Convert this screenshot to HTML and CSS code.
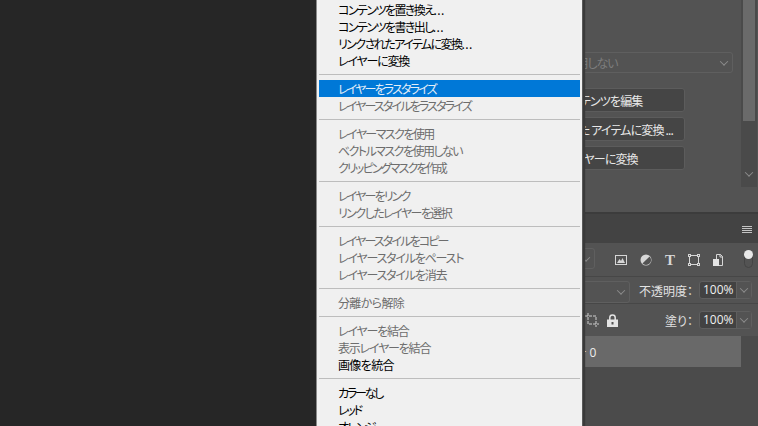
FILE: index.html
```html
<!DOCTYPE html>
<html lang="ja">
<head>
    <meta charset="UTF-8">
    <title>レイヤーメニュー</title>
    <link rel="stylesheet" href="styles.css">
</head>
<body>
    <div class="workspace"></div>

    <div class="panels">
        <div class="props">
            <div class="props-body">
                <div class="select select-disabled"><span>マスクを使用しない</span><i class="chev"></i></div>
                <button class="btn">コンテンツを編集</button>
                <button class="btn">リンクされた アイテムに変換 ...</button>
                <button class="btn">レイヤーに変換</button>
            </div>
            <div class="scrollbar">
                <div class="thumb"></div>
                <i class="chev"></i>
            </div>
        </div>

        <div class="tabs">
            <div class="hamburger"><i></i><i></i><i></i><i></i></div>
        </div>

        <div class="row row-filter">
            <div class="select filter-select"><i class="chev"></i></div>
            <div class="filter-icons">
                <svg width="12" height="12" viewBox="0 0 12 12"><rect x="0.5" y="1.5" width="11" height="9" fill="none" stroke="#d6d6d6"/><path d="M2 9l2.5-4 1.5 2 1.5-3 2.5 5z" fill="#d6d6d6"/></svg>
                <svg width="12" height="12" viewBox="0 0 12 12"><circle cx="6" cy="6" r="5.5" fill="#d6d6d6"/><path d="M9.6 2.4a5 5 0 0 1-7.2 7.2z" fill="#535353"/></svg>
                <span class="icon-t">T</span>
                <svg width="12" height="12" viewBox="0 0 12 12"><rect x="1.5" y="1.5" width="9" height="9" fill="none" stroke="#d6d6d6"/><g fill="#535353" stroke="#d6d6d6"><rect x="0.5" y="0.5" width="2" height="2"/><rect x="9.5" y="0.5" width="2" height="2"/><rect x="0.5" y="9.5" width="2" height="2"/><rect x="9.5" y="9.5" width="2" height="2"/></g></svg>
                <svg width="10" height="12" viewBox="0 0 10 12"><path d="M3.5 0.5h4l2 2v9h-6z" fill="none" stroke="#d6d6d6"/><path d="M7 0v3h3" fill="none" stroke="#d6d6d6"/><rect x="0" y="5" width="6" height="7" fill="#e4e4e4"/></svg>
            </div>
            <div class="toggle"><i></i></div>
        </div>

        <div class="row row-opacity">
            <div class="select blend-select"><i class="chev"></i></div>
            <span class="label">不透明度：</span>
            <div class="value"><span>100%</span><b><i class="chev"></i></b></div>
        </div>

        <div class="row row-fill">
            <svg class="icon-crop" width="14" height="14" viewBox="0 0 14 14"><path d="M3 0v11h11M0 3h11v11" fill="none" stroke="#cfcfcf" stroke-dasharray="3 1"/></svg>
            <svg class="icon-lock" width="11" height="13" viewBox="0 0 11 13"><path d="M2.8 6V3.6a2.7 2.7 0 0 1 5.4 0V6" fill="none" stroke="#e4e4e4" stroke-width="1.5"/><path d="M0 5.5h11V13H0z" fill="#e4e4e4"/><rect x="4.5" y="8" width="2" height="2.5" fill="#535353"/></svg>
            <span class="label">塗り：</span>
            <div class="value"><span>100%</span><b><i class="chev"></i></b></div>
        </div>

        <div class="layer-list">
            <div class="layer">レイヤー <span class="layer-num">0</span></div>
        </div>
    </div>

    <ul class="menu">
        <li class="t3">コンテンツを置き換え<span class="dots">...</span></li>
        <li class="t3">コンテンツを書き出し<span class="dots">...</span></li>
        <li class="t3">リンクされたアイテムに変換<span class="dots">...</span></li>
        <li class="t2">レイヤーに変換</li>
        <li class="sep"></li>
        <li class="active t4">レイヤーをラスタライズ</li>
        <li class="off t4">レイヤースタイルをラスタライズ</li>
        <li class="sep"></li>
        <li class="off t3">レイヤーマスクを使用</li>
        <li class="off t3">ベクトルマスクを使用しない</li>
        <li class="off t4">クリッピングマスクを作成</li>
        <li class="sep"></li>
        <li class="off t4">レイヤーをリンク</li>
        <li class="off t3">リンクしたレイヤーを選択</li>
        <li class="sep"></li>
        <li class="off t4">レイヤースタイルをコピー</li>
        <li class="off t2">レイヤースタイルをペースト</li>
        <li class="off t2">レイヤースタイルを消去</li>
        <li class="sep"></li>
        <li class="off t1">分離から解除</li>
        <li class="sep"></li>
        <li class="off t2">レイヤーを結合</li>
        <li class="off t2">表示レイヤーを結合</li>
        <li class="t1">画像を統合</li>
        <li class="sep"></li>
        <li class="t5">カラーなし</li>
        <li class="t5">レッド</li>
        <li class="t4">オレンジ</li>
    </ul>
</body>
</html>
```
FILE: styles.css
```css
body {
    margin: 0;
    width: 758px;
    height: 426px;
    overflow: hidden;
    display: flex;
    position: relative;
    background-color: #262626;
    font-family: "Noto Sans CJK JP", "Liberation Sans", sans-serif;
    font-size: 12px;
    font-feature-settings: "palt";
    color: #e6e6e6;
}
.workspace {
    flex: 0 0 458px;
}
.panels {
    flex: 0 0 300px;
    display: flex;
    flex-direction: column;
    background-color: #535353;
}

/* top panel */
.props {
    height: 212px;
    display: flex;
    border-bottom: 1px solid #3c3c3c;
}
.props-body {
    flex: 1;
    padding-top: 52px;
}
.select {
    box-sizing: border-box;
    border: 1px solid #5f5f5f;
    border-radius: 3px;
    display: flex;
    align-items: center;
    justify-content: space-between;
    padding: 0 5px 0 8px;
}
.select-disabled {
    height: 21px;
    margin: 0 8px 15px 20px;
    padding-left: 47px;
    color: #7d7d7d;
    letter-spacing: -1px;
}
.btn {
    display: block;
    box-sizing: border-box;
    width: 170px;
    height: 24px;
    margin: 0 0 5px 57px;
    padding: 0 0 0 2px;
    background-color: #454545;
    border: 1px solid #5c5c5c;
    border-radius: 3px;
    color: #e8e8e8;
    font: inherit;
    font-feature-settings: inherit;
    letter-spacing: -0.85px;
}
.scrollbar {
    flex: 0 0 16px;
    height: 187px;
    margin-right: 1px;
    background-color: #4a4a4a;
    display: flex;
    flex-direction: column;
    align-items: center;
}
.thumb {
    width: 12px;
    height: 121px;
    background-color: #6a6a6a;
}
.scrollbar .chev {
    margin-top: 50px;
}
.chev {
    display: block;
    flex: none;
    width: 5px;
    height: 5px;
    border-right: 1px solid #8c8c8c;
    border-bottom: 1px solid #8c8c8c;
    transform: rotate(45deg) translate(-1px, -1px);
}

/* tab band */
.tabs {
    height: 30px;
    background-color: #434343;
    border-top: 1px solid #3c3c3c;
    box-sizing: border-box;
    display: flex;
    align-items: center;
    justify-content: flex-end;
    padding-right: 6px;
}
.hamburger i {
    display: block;
    width: 10px;
    height: 1px;
    margin-top: 1px;
    background-color: #c4c4c4;
}

/* layer option rows */
.row {
    display: flex;
    align-items: center;
    border-bottom: 1px solid #474747;
    box-sizing: border-box;
    padding-left: 20px;
}
.row-filter {
    height: 34px;
}
.filter-select {
    width: 117px;
    height: 21px;
    justify-content: flex-end;
    margin-top: -2px;
}
.filter-icons {
    display: flex;
    align-items: center;
    gap: 13px;
    margin-left: 20px;
}
.icon-t {
    width: 10px;
    font-family: "Liberation Serif", serif;
    font-size: 15px;
    font-weight: bold;
    line-height: 12px;
    text-align: center;
    color: #d6d6d6;
}
.toggle {
    box-sizing: border-box;
    width: 9px;
    height: 18px;
    margin: -2px 5px 0 auto;
    border: 1px solid #444;
    border-radius: 5px;
    position: relative;
}
.toggle i {
    position: absolute;
    left: -1px;
    top: -1px;
    width: 9px;
    height: 9px;
    border-radius: 50%;
    background-color: #e8e8e8;
}
.row-opacity {
    height: 27px;
}
.blend-select {
    width: 152px;
    height: 22px;
    justify-content: flex-end;
    margin-top: 3px;
}
.label {
    margin-left: auto;
    margin-right: 6px;
    color: #e2e2e2;
    white-space: nowrap;
}
.value {
    box-sizing: border-box;
    width: 53px;
    height: 18px;
    margin-right: 6px;
    display: flex;
    border: 1px solid #5f5f5f;
    border-radius: 3px;
    background-color: #424242;
    font-family: "Open Sans", sans-serif;
    line-height: 16px;
    color: #f0f0f0;
}
.value span {
    flex: 1;
    padding-left: 3px;
}
.value b {
    flex: 0 0 14px;
    background-color: #535353;
    border-left: 1px solid #5f5f5f;
    display: flex;
    align-items: center;
    justify-content: center;
}
.row-fill {
    height: 32px;
    border-bottom: none;
    padding-left: 127px;
}
.icon-lock {
    margin-left: 8px;
}

/* layer list */
.layer-list {
    flex: 1;
    background-color: #4b4b4b;
}
.layer {
    height: 31px;
    margin-right: 17px;
    padding-left: 85px;
    background-color: #696969;
    line-height: 31px;
    color: #eeeeee;
}
.layer-num {
    font-family: "Open Sans", sans-serif;
}

/* context menu */
.menu {
    position: absolute;
    left: 316px;
    top: 0;
    box-sizing: border-box;
    width: 267px;
    height: 426px;
    margin: 0;
    padding: 1px 2px 0;
    list-style: none;
    overflow: hidden;
    background-color: #f0f0f0;
    border-left: 1px solid #8a8a8a;
    border-right: 1px solid #5a5a5a;
    box-shadow: 2px 0 1px #3a3a3a;
    color: #000000;
}
.menu li {
    height: 17px;
    padding-left: 19px;
    line-height: 17px;
    white-space: nowrap;
}
.menu .sep {
    box-sizing: border-box;
    height: 11px;
    padding: 0;
    background: linear-gradient(#bdbdbd, #bdbdbd) 0 5px / 100% 1px no-repeat;
}
.menu .off {
    color: #6d6d6d;
}
.menu .active {
    background-color: #0078d7;
    color: #e4eef8;
}
.dots {
    letter-spacing: 0.4px;
}

.t1 {
    letter-spacing: -0.65px;
}
.t2 {
    letter-spacing: -1.2px;
}
.t3 {
    letter-spacing: -1.55px;
}
.t4 {
    letter-spacing: -1.85px;
}
.t5 {
    letter-spacing: -2.2px;
}
```
